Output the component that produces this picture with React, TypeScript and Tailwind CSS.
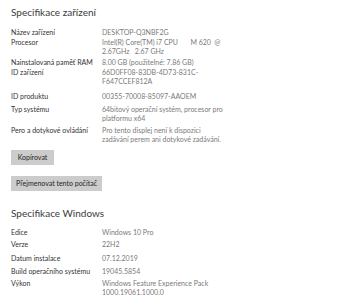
import React from 'react';

type Row = { label: string; value: string[]; mt: string };

const deviceRows: Row[] = [
  { label: 'Název zařízení', value: ['DESKTOP-Q3NBF2G'], mt: 'mt-[8px]' },
  {
    label: 'Procesor',
    value: ['Intel(R) Core(TM) i7 CPU       M 620  @', '2.67GHz   2.67 GHz'],
    mt: 'mt-[1px]'
  },
  { label: 'Nainstalovaná paměť RAM', value: ['8.00 GB (použitelné: 7.86 GB)'], mt: 'mt-[2px]' },
  { label: 'ID zařízení', value: ['66D0FF08-83DB-4D73-831C-', 'F647CCEF812A'], mt: 'mt-[1px]' },
  { label: 'ID produktu', value: ['00355-70008-85097-AAOEM'], mt: 'mt-[6px]' },
  {
    label: 'Typ systému',
    value: ['64bitový operační systém, procesor pro', 'platformu x64'],
    mt: 'mt-[4px]'
  },
  {
    label: 'Pero a dotykové ovládání',
    value: ['Pro tento displej není k dispozici', 'zadávání perem ani dotykové zadávání.'],
    mt: 'mt-[3px]'
  }
];

const windowsRows: Row[] = [
  { label: 'Edice', value: ['Windows 10 Pro'], mt: 'mt-[7px]' },
  { label: 'Verze', value: ['22H2'], mt: 'mt-[3px]' },
  { label: 'Datum instalace', value: ['07.12.2019'], mt: 'mt-[5px]' },
  { label: 'Build operačního systému', value: ['19045.5854'], mt: 'mt-[4px]' },
  { label: 'Výkon', value: ['Windows Feature Experience Pack', '1000.19061.1000.0'], mt: 'mt-[3px]' }
];

function SpecRow({ row }: { row: Row }) {
  return (
    <div className={`grid grid-cols-[91px_1fr] text-[7px] leading-[9px] ${row.mt}`}>
      <div className="text-[#333333]">{row.label}</div>
      <div className="whitespace-pre text-[#7a7a7a]">
        {row.value.map((line) => (
          <div key={line}>{line}</div>
        ))}
      </div>
    </div>
  );
}

function Heading({ children, mt }: { children: React.ReactNode; mt: string }) {
  return <h2 className={`text-[10px] leading-[16px] text-[#3a3a3a] ${mt}`}>{children}</h2>;
}

export default function App() {
  return (
    <div
      className="flex h-[300px] w-[340px] flex-col bg-white px-[11px]"
      style={{ fontFamily: 'Lato, "Open Sans", sans-serif' }}
    >
      <Heading mt="mt-[4px]">Specifikace zařízení</Heading>
      {deviceRows.map((row) => (
        <SpecRow key={row.label} row={row} />
      ))}
      <button className="mt-[6px] h-[15px] w-[43px] bg-[#cccccc] text-[7px] text-[#1f1f1f]">
        Kopírovat
      </button>
      <button className="mt-[11px] h-[15px] w-[91px] bg-[#cccccc] text-[7px] text-[#1f1f1f]">
        Přejmenovat tento počítač
      </button>
      <Heading mt="mt-[14px]">Specifikace Windows</Heading>
      {windowsRows.map((row) => (
        <SpecRow key={row.label} row={row} />
      ))}
    </div>
  );
}
